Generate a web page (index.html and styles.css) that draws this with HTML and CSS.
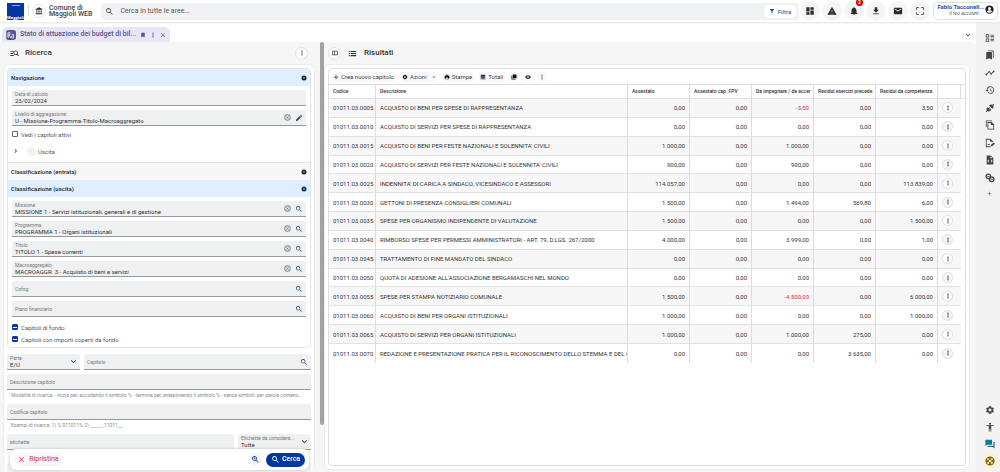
FILE: index.html
```html
<!DOCTYPE html>
<html lang="it">
<head>
<meta charset="utf-8">
<title>Stato di attuazione dei budget di bilancio</title>
<link rel="stylesheet" href="styles.css">
</head>
<body>
<svg class="sprite" aria-hidden="true">
  <symbol id="search" viewBox="0 0 24 24"><path d="M15.5 14h-.8l-.3-.3A6.5 6.5 0 1 0 13.7 14.400l.3.3v.8l5 5 1.500-1.500zm-6 0a4.500 4.500 0 1 1 0-9 4.500 4.500 0 0 1 0 9z"/></symbol>
  <symbol id="bank" viewBox="0 0 24 24"><path d="M4 10v7h3v-7zm6.500 0v7h3v-7zM2 22h20v-3H2zm15-12v7h3v-7zM12 1 2 6v2h20V6z"/></symbol>
  <symbol id="filter" viewBox="0 0 24 24"><path d="M4 4h16v2l-6 7v8h-4v-8L4 6z"/></symbol>
  <symbol id="dashboard" viewBox="0 0 24 24"><path d="M3 13h8V3H3zm0 8h8v-6H3zm10 0h8V11h-8zm0-18v6h8V3z"/></symbol>
  <symbol id="warning" viewBox="0 0 24 24"><path d="M1 21h22L12 2zm12-3h-2v-2h2zm0-4h-2v-4h2z"/></symbol>
  <symbol id="bell" viewBox="0 0 24 24"><path d="M12 22a2 2 0 0 0 2-2h-4c0 1.100.9 2 2 2zm6-6v-5c0-3.100-1.600-5.600-4.500-6.300V4a1.500 1.500 0 0 0-3 0v.7C7.600 5.400 6 7.900 6 11v5l-2 2v1h16v-1z"/></symbol>
  <symbol id="download" viewBox="0 0 24 24"><path d="M19 9h-4V3H9v6H5l7 7zM5 18v2h14v-2z"/></symbol>
  <symbol id="mail" viewBox="0 0 24 24"><path d="M20 4H4a2 2 0 0 0-2 2v12c0 1.100.9 2 2 2h16a2 2 0 0 0 2-2V6a2 2 0 0 0-2-2zm0 4-8 5-8-5V6l8 5 8-5z"/></symbol>
  <symbol id="fullscreen" viewBox="0 0 24 24"><path d="M3 3h6v2H5v4H3zm12 0h6v6h-2V5h-4zM3 15h2v4h4v2H3zm16 0h2v6h-6v-2h4z"/></symbol>
  <symbol id="account" viewBox="0 0 24 24"><path d="M12 1a11 11 0 1 0 0 22 11 11 0 0 0 0-22zm0 4a4 4 0 1 1 0 8 4 4 0 0 1 0-8zm0 15.500a8.500 8.500 0 0 1-6.800-3.500c.1-2 4.500-3 6.800-3s6.700 1 6.800 3a8.500 8.500 0 0 1-6.800 3.500z"/></symbol>
  <symbol id="bookmark" viewBox="0 0 24 24"><path d="M5 3h14v18l-7-3-7 3z"/></symbol>
  <symbol id="dots" viewBox="0 0 24 24"><circle cx="12" cy="5" r="2.600"/><circle cx="12" cy="12" r="2.600"/><circle cx="12" cy="19" r="2.600"/></symbol>
  <symbol id="close" viewBox="0 0 24 24"><path d="m5 3.500 7 7 7-7L20.500 5l-7 7 7 7-1.500 1.500-7-7-7 7L3.500 19l7-7-7-7z"/></symbol>
  <symbol id="manage" viewBox="0 0 24 24"><path d="M1 5h9v2.500H1zm0 5.500h7V13H1zM1 16h9v2.500H1z"/><path fill-rule="evenodd" d="M15 4a6 6 0 0 1 5 9.300l3.500 4.200-1.700 1.700-3.800-4A6 6 0 1 1 15 4zm0 2.200a3.800 3.800 0 1 0 0 7.600 3.800 3.800 0 0 0 0-7.600z"/></symbol>
  <symbol id="gear" viewBox="0 0 24 24"><path fill-rule="evenodd" d="m19.400 13 2.200 1.600-2 3.600-2.600-1-1.600 1L15 21H9l-.4-2.800-1.600-1-2.600 1-2-3.600L4.600 13v-2L2.400 9.400l2-3.600 2.600 1 1.600-1L9 3h6l.4 2.800 1.600 1 2.600-1 2 3.600-2.200 1.600zM12 8.500a3.500 3.500 0 1 0 0 7 3.500 3.500 0 0 0 0-7z"/></symbol>
  <symbol id="expand" viewBox="0 0 24 24"><path fill-rule="evenodd" d="M12 2a10 10 0 1 0 0 20 10 10 0 0 0 0-20zM7 10h10l-5 5z"/></symbol>
  <symbol id="cancel" viewBox="0 0 24 24"><path fill-rule="evenodd" d="M12 1a11 11 0 1 0 0 22 11 11 0 0 0 0-22zm0 3a8 8 0 1 1 0 16 8 8 0 0 1 0-16z"/><path d="m8.500 7 3.500 3.500L15.500 7 17 8.500 13.500 12l3.500 3.500-1.500 1.500-3.500-3.500L8.500 17 7 15.500l3.500-3.500L7 8.500z"/></symbol>
  <symbol id="pencil" viewBox="0 0 24 24"><path d="M3 17.200V21h3.800L17.800 9.900l-3.700-3.700zM20.700 7a1 1 0 0 0 0-1.400l-2.300-2.300a1 1 0 0 0-1.400 0l-1.800 1.800 3.700 3.700z"/></symbol>
  <symbol id="right" viewBox="0 0 24 24"><path d="M8.500 4 6 6.500l5.500 5.500L6 17.500 8.500 20l8-8z"/></symbol>
  <symbol id="down" viewBox="0 0 24 24"><path d="m5 7-2 2 9 9 9-9-2-2-7 7z"/></symbol>
  <symbol id="zoomin" viewBox="0 0 24 24"><path d="M15.500 14h-.8l-.3-.3A6.500 6.500 0 1 0 13.700 14.400l.3.3v.8l5 5 1.500-1.500zm-6 0a4.500 4.500 0 1 1 0-9 4.500 4.500 0 0 1 0 9zM8.700 7h1.600v1.700H12v1.600h-1.700V12H8.700v-1.700H7V8.700h1.700z"/></symbol>
  <symbol id="sidepane" viewBox="0 0 24 24"><path fill-rule="evenodd" d="M1 3h22v18H1zm3 3v12h5V6zm8 0v12h8V6z"/></symbol>
  <symbol id="list" viewBox="0 0 24 24"><path d="M2 5h3v3H2zm5 0h15v3H7zm-5 5.500h3v3H2zm5 0h15v3H7zM2 16h3v3H2zm5 0h15v3H7z"/></symbol>
  <symbol id="plus" viewBox="0 0 24 24"><path d="M10.500 3h3v7.500H21v3h-7.500V21h-3v-7.500H3v-3h7.500z"/></symbol>
  <symbol id="print" viewBox="0 0 24 24"><path fill-rule="evenodd" d="M19 8H5a3 3 0 0 0-3 3v6h4v4h12v-4h4v-6a3 3 0 0 0-3-3zm-3 11H8v-5h8zM18 3H6v4h12z"/></symbol>
  <symbol id="totals" viewBox="0 0 24 24"><path fill-rule="evenodd" d="M3 3h18v18H3zm2 4v3h4V7zm6 0v3h3V7zm5 0v3h3V7zM5 12v2h4v-2zm6 0v2h3v-2zm5 0v2h3v-2zM5 16v3h4v-3zm6 0v3h3v-3zm5 0v3h3v-3z"/></symbol>
  <symbol id="copyfull" viewBox="0 0 24 24"><path d="M7 2h15v15H7z"/><path d="M2 6h3v13h13v3H2z"/></symbol>
  <symbol id="eye" viewBox="0 0 24 24"><path fill-rule="evenodd" d="M12 4.500C7 4.500 2.700 7.600 1 12c1.700 4.400 6 7.500 11 7.500s9.300-3.100 11-7.500c-1.700-4.400-6-7.500-11-7.500zM12 17a5 5 0 1 1 0-10 5 5 0 0 1 0 10zm0-8a3 3 0 1 0 0 6 3 3 0 0 0 0-6z"/></symbol>
  <symbol id="summary" viewBox="0 0 24 24"><path fill-rule="evenodd" d="M2 3h8v8H2zm2 2v4h4V5zm-2 8h8v8H2zm2 2v4h4v-4zM13 4h9v2h-9zm0 4h9v2h-9zm0 6h9v2h-9zm0 4h9v2h-9z"/></symbol>
  <symbol id="bookmarks" viewBox="0 0 24 24"><path d="M19 18l2 1V3a2 2 0 0 0-2-2H9a2 2 0 0 0-2 2h10a2 2 0 0 1 2 2zM15 5H5a2 2 0 0 0-2 2v16l7-3 7 3V7a2 2 0 0 0-2-2z"/></symbol>
  <symbol id="trend" viewBox="0 0 24 24"><path d="M23 8a2 2 0 0 1-2.500 2l-3.600 3.500a2 2 0 1 1-3.800 0L10.500 11h-1L5 15.500a2 2 0 1 1-1.500-1.500L8 9.500a2 2 0 1 1 3.900 0l2.600 2.500h1L19 8.500A2 2 0 1 1 23 8z"/></symbol>
  <symbol id="history" viewBox="0 0 24 24"><path d="M13 3a9 9 0 0 0-9 9H1l4 4 4-4H6a7 7 0 1 1 2.100 4.900l-1.400 1.500A9 9 0 1 0 13 3zm-1 5v5l4.300 2.500.7-1.200-3.500-2.100V8z"/></symbol>
  <symbol id="plug" viewBox="0 0 24 24"><path d="m20 2 2 2-2.500 2.500c1.500 2 1.200 4.500-.5 6.200L17.500 14 10 6.500 11.300 5c1.700-1.700 4.200-2 6.200-.5zM6.500 10l2 2 2-2 1.500 1.500-2 2 1.500 1.500 2-2 1.500 1.500-2 2 1 1-1.300 1.300c-1.700 1.700-4.200 2-6.200.5L4 22l-2-2 2.500-2.500c-1.500-2-1.200-4.500.5-6.200z"/></symbol>
  <symbol id="copy" viewBox="0 0 24 24"><path fill-rule="evenodd" d="M2 1h15v2H4v14H2zm4 4h10l6 6v12H6zm2 2v14h12v-9h-6V7z"/></symbol>
  <symbol id="docedit" viewBox="0 0 24 24"><path fill-rule="evenodd" d="M2 2h11l6 6v2h-2V9h-5V4H4v16h9v2H2z"/><path d="m21 11 3 3-7 6h-3v-3zM6 15h6v2H6z"/></symbol>
  <symbol id="doccode" viewBox="0 0 24 24"><path fill-rule="evenodd" d="M4 1h10l6 6v16H4zm9 2v5h5zM9 11l-3.500 3.500L9 18l1.300-1.300L8 14.500l2.300-2.200zm6 0-1.300 1.300 2.300 2.200-2.300 2.200L15 18l3.500-3.500z"/></symbol>
  <symbol id="chain" viewBox="0 0 24 24"><path fill-rule="evenodd" d="M8 1a7 7 0 1 1 0 14A7 7 0 0 1 8 1zm0 3a4 4 0 1 0 0 8 4 4 0 0 0 0-8z"/><path fill-rule="evenodd" d="M16 8a7 7 0 1 1 0 14 7 7 0 0 1 0-14zm0 3a4 4 0 1 0 0 8 4 4 0 0 0 0-8z"/><path d="M5 7h6v2H5zm8 7h6v2h-6z"/></symbol>
  <symbol id="person" viewBox="0 0 24 24"><circle cx="12" cy="4" r="2.500"/><path d="M21 9h-6v14h-2v-7h-2v7H9V9H3V7h18z"/></symbol>
  <symbol id="chat" viewBox="0 0 24 24"><path d="M22 7h-2v9H6v2c0 .6.400 1 1 1h12l4 4V8c0-.6-.4-1-1-1zm-5 6V3c0-.6-.4-1-1-1H2c-.6 0-1 .4-1 1v14l4-3h11c.6 0 1-.4 1-1z"/></symbol>
  <symbol id="help" viewBox="0 0 24 24"><path fill-rule="evenodd" d="M12 1a11 11 0 1 0 0 22 11 11 0 0 0 0-22zM8 4.500 10 8a5 5 0 0 0-2 2L4.500 8A9 9 0 0 1 8 4.500zm8 0A9 9 0 0 1 19.500 8L16 10a5 5 0 0 0-2-2zM12 9a3 3 0 1 1 0 6 3 3 0 0 1 0-6zm-7.500 7L8 14a5 5 0 0 0 2 2l-2 3.500A9 9 0 0 1 4.500 16zm11.500-2 3.500 2a9 9 0 0 1-3.500 3.500L14 16a5 5 0 0 0 2-2z"/></symbol>
  <symbol id="ra" viewBox="0 0 30 30"><rect width="30" height="30" rx="8"/><path d="M7 24V7h5v8H7m3 0 4 9M17 13h6v11h-6v-6h6M3 8v14" fill="none" stroke="#fff" stroke-width="2"/></symbol>
</svg>

<div class="app">
  <header class="topbar">
    <a class="logo" href="#" aria-label="Maggioli"><i></i><span>Maggioli</span></a>
    <span class="rule"></span>
    <span class="round bank"><svg><use href="#bank"/></svg></span>
    <span class="entity">Comune di<br>Maggioli WEB</span>
    <div class="search">
      <svg><use href="#search"/></svg>
      <input type="text" aria-label="Cerca" placeholder="Cerca in tutte le aree...">
      <button class="filter"><svg><use href="#filter"/></svg>Filtra</button>
    </div>
    <nav class="actions">
      <button class="round" aria-label="Cruscotto"><svg><use href="#dashboard"/></svg></button>
      <button class="round" aria-label="Avvisi"><svg><use href="#warning"/></svg></button>
      <button class="round" aria-label="Notifiche"><svg><use href="#bell"/></svg><b class="badge">2</b></button>
      <button class="round" aria-label="Scarica"><svg><use href="#download"/></svg></button>
      <button class="round" aria-label="Messaggi"><svg><use href="#mail"/></svg></button>
      <button class="round" aria-label="Schermo intero"><svg><use href="#fullscreen"/></svg></button>
    </nav>
    <button class="account"><span><strong>Fabio Tacconell...</strong><em>il tuo account</em></span><svg><use href="#account"/></svg></button>
  </header>

  <div class="workspace">
    <div class="main">
      <div class="tabs">
        <div class="tab">
          <svg class="tab-logo"><use href="#ra"/></svg>
          <span>Stato di attuazione dei budget di bil...</span>
          <button aria-label="Segnalibro"><svg><use href="#bookmark"/></svg></button>
          <button aria-label="Opzioni"><svg><use href="#dots"/></svg></button>
          <button aria-label="Chiudi"><svg><use href="#close"/></svg></button>
        </div>
        <button class="more" aria-label="Altre schede"><svg><use href="#down"/></svg></button>
      </div>

      <div class="panes">
        <section class="pane filters">
          <div class="pane-head">
            <svg><use href="#manage"/></svg>
            <h2>Ricerca</h2>
            <button class="circle" aria-label="Opzioni"><svg><use href="#dots"/></svg></button>
          </div>
          <form class="sheet">
            <div class="accordion">
              <button type="button" class="acc open"><span>Navigazione</span><svg><use href="#expand"/></svg></button>
              <div class="acc-body">
                <div class="field"><div class="text"><label for="f1">Data di calcolo</label><input id="f1" value="23/02/2024"></div></div>
                <div class="field"><div class="text"><label for="f2">Livello di aggregazione:</label><input id="f2" value="U - Missione-Programma-Titolo-Macroaggregato"></div><svg class="clear"><use href="#cancel"/></svg><svg class="look"><use href="#pencil"/></svg></div>
                <label class="check first"><input type="checkbox">Vedi i capitoli attivi</label>
                <div class="tree"><svg><use href="#right"/></svg><i></i><span>Uscita</span></div>
              </div>
              <button type="button" class="acc shut"><span>Classificazione (entrata)</span><svg><use href="#expand"/></svg></button>
              <button type="button" class="acc open blue"><span>Classificazione (uscita)</span><svg><use href="#expand"/></svg></button>
              <div class="acc-body">
                <div class="field"><div class="text"><label for="f3">Missione</label><input id="f3" value="MISSIONE 1 - Servizi istituzionali, generali e di gestione"></div><svg class="clear"><use href="#cancel"/></svg><svg class="look"><use href="#search"/></svg></div>
                <div class="field"><div class="text"><label for="f4">Programma</label><input id="f4" value="PROGRAMMA 1 - Organi istituzionali"></div><svg class="clear"><use href="#cancel"/></svg><svg class="look"><use href="#search"/></svg></div>
                <div class="field"><div class="text"><label for="f5">Titolo</label><input id="f5" value="TITOLO 1 - Spese correnti"></div><svg class="clear"><use href="#cancel"/></svg><svg class="look"><use href="#search"/></svg></div>
                <div class="field"><div class="text"><label for="f6">Macroaggregato</label><input id="f6" value="MACROAGGR. 3 - Acquisto di beni e servizi"></div><svg class="clear"><use href="#cancel"/></svg><svg class="look"><use href="#search"/></svg></div>
                <div class="field"><div class="text"><input aria-label="Cofog" placeholder="Cofog"></div><svg class="look"><use href="#search"/></svg></div>
                <div class="field"><div class="text"><input aria-label="Piano finanziario" placeholder="Piano finanziario"></div><svg class="look"><use href="#search"/></svg></div>
                <label class="check"><input type="checkbox" checked>Capitoli di fondo</label>
                <label class="check last"><input type="checkbox" checked>Capitoli con importi coperti da fondo</label>
              </div>
            </div>
            <div class="row">
              <div class="field small"><div class="text"><label for="s1">Parte</label><select id="s1"><option>E/U</option></select></div><svg class="look"><use href="#down"/></svg></div>
              <div class="field"><div class="text"><input aria-label="Capitolo" placeholder="Capitolo"></div><svg class="look"><use href="#search"/></svg></div>
            </div>
            <div class="field"><div class="text"><input aria-label="Descrizione capitolo" placeholder="Descrizione capitolo"></div></div>
            <p class="hint">Modalità di ricerca: - inizia per, accodando il simbolo % - termina per, anteponendo il simbolo % - senza simboli, per parola contenu...</p>
            <div class="field"><div class="text"><input aria-label="Codifica capitolo" placeholder="Codifica capitolo"></div></div>
            <p class="hint">Esempi di ricerca: 1) %.011011% 2) ____._.11011__</p>
            <div class="row">
              <div class="field"><div class="text"><input aria-label="etichette" placeholder="etichette"></div></div>
              <div class="field small"><div class="text"><label for="s2">Etichette da considera...</label><select id="s2"><option>Tutte</option></select></div><svg class="look"><use href="#down"/></svg></div>
            </div>
            <div class="field under"></div>
          </form>
          <div class="submit">
            <button class="reset"><svg><use href="#close"/></svg>Ripristina</button>
            <button class="zoom" aria-label="Ricerca avanzata"><svg><use href="#zoomin"/></svg></button>
            <button class="go"><svg><use href="#search"/></svg>Cerca</button>
          </div>
        </section>
        <div class="scroll"><i></i></div>

        <section class="pane results">
          <div class="pane-head">
            <button class="circle" aria-label="Pannello"><svg><use href="#sidepane"/></svg></button>
            <svg class="list"><use href="#list"/></svg>
            <h2>Risultati</h2>
          </div>
          <div class="sheet">
            <div class="grid">
              <div class="toolbar">
                <button><svg><use href="#plus"/></svg>Crea nuovo capitolo</button>
                <button><svg class="ink"><use href="#gear"/></svg>Azioni<svg class="caret"><use href="#down"/></svg></button>
                <button><svg class="ink"><use href="#print"/></svg>Stampe</button>
                <button><svg class="ink"><use href="#totals"/></svg>Totali</button>
                <button aria-label="Copia"><svg class="ink"><use href="#copyfull"/></svg></button>
                <button aria-label="Mostra"><svg class="ink"><use href="#eye"/></svg></button>
                <button aria-label="Altro"><svg class="sky"><use href="#dots"/></svg></button>
              </div>
              <table>
                <colgroup><col class="code"><col><col class="num"><col class="num"><col class="num"><col class="num"><col class="num"><col class="menu"><col class="edge"></colgroup>
                <thead><tr><th>Codice</th><th>Descrizione</th><th>Assestato</th><th>Assestato cap. FPV</th><th>Da impegnare / da accer</th><th>Residui esercizi precede</th><th>Residui da competenza</th><th></th><th></th></tr></thead>
                <tbody>
                  <tr><td>01011.03.0005</td><td>ACQUISTO DI BENI PER SPESE DI RAPPRESENTANZA</td><td>0,00</td><td>0,00</td><td class="neg">-3,50</td><td>0,00</td><td>3,50</td><td><button aria-label="Menu"><svg><use href="#dots"/></svg></button></td><td></td></tr>
                  <tr><td>01011.03.0010</td><td>ACQUISTO DI SERVIZI PER SPESE DI RAPPRESENTANZA</td><td>0,00</td><td>0,00</td><td>0,00</td><td>0,00</td><td>0,00</td><td><button aria-label="Menu"><svg><use href="#dots"/></svg></button></td><td></td></tr>
                  <tr><td>01011.03.0015</td><td>ACQUISTO DI BENI PER FESTE NAZIONALI E SOLENNITA' CIVILI</td><td>1.000,00</td><td>0,00</td><td>1.000,00</td><td>0,00</td><td>0,00</td><td><button aria-label="Menu"><svg><use href="#dots"/></svg></button></td><td></td></tr>
                  <tr><td>01011.03.0020</td><td>ACQUISTO DI SERVIZI PER FESTE NAZIONALI E SOLENNITA' CIVILI</td><td>900,00</td><td>0,00</td><td>900,00</td><td>0,00</td><td>0,00</td><td><button aria-label="Menu"><svg><use href="#dots"/></svg></button></td><td></td></tr>
                  <tr><td>01011.03.0025</td><td>INDENNITA' DI CARICA A SINDACO, VICESINDACO E ASSESSORI</td><td>114.057,00</td><td>0,00</td><td>0,00</td><td>0,00</td><td>113.839,00</td><td><button aria-label="Menu"><svg><use href="#dots"/></svg></button></td><td></td></tr>
                  <tr><td>01011.03.0030</td><td>GETTONI DI PRESENZA CONSIGLIERI COMUNALI</td><td>1.500,00</td><td>0,00</td><td>1.494,00</td><td>569,80</td><td>6,00</td><td><button aria-label="Menu"><svg><use href="#dots"/></svg></button></td><td></td></tr>
                  <tr><td>01011.03.0035</td><td>SPESE PER ORGANISMO INDIPENDENTE DI VALUTAZIONE</td><td>1.500,00</td><td>0,00</td><td>0,00</td><td>0,00</td><td>1.500,00</td><td><button aria-label="Menu"><svg><use href="#dots"/></svg></button></td><td></td></tr>
                  <tr><td>01011.03.0040</td><td>RIMBORSO SPESE PER PERMESSI AMMINISTRATORI - ART. 79, D.LGS. 267/2000</td><td>4.000,00</td><td>0,00</td><td>3.999,00</td><td>0,00</td><td>1,00</td><td><button aria-label="Menu"><svg><use href="#dots"/></svg></button></td><td></td></tr>
                  <tr><td>01011.03.0045</td><td>TRATTAMENTO DI FINE MANDATO DEL SINDACO</td><td>0,00</td><td>0,00</td><td>0,00</td><td>0,00</td><td>0,00</td><td><button aria-label="Menu"><svg><use href="#dots"/></svg></button></td><td></td></tr>
                  <tr><td>01011.03.0050</td><td>QUOTA DI ADESIONE ALL'ASSOCIAZIONE BERGAMASCHI NEL MONDO</td><td>0,00</td><td>0,00</td><td>0,00</td><td>0,00</td><td>0,00</td><td><button aria-label="Menu"><svg><use href="#dots"/></svg></button></td><td></td></tr>
                  <tr><td>01011.03.0055</td><td>SPESE PER STAMPA NOTIZIARIO COMUNALE</td><td>1.500,00</td><td>0,00</td><td class="neg">-4.500,00</td><td>0,00</td><td>6.000,00</td><td><button aria-label="Menu"><svg><use href="#dots"/></svg></button></td><td></td></tr>
                  <tr><td>01011.03.0060</td><td>ACQUISTO DI BENI PER ORGANI ISTITUZIONALI</td><td>1.000,00</td><td>0,00</td><td>0,00</td><td>0,00</td><td>1.000,00</td><td><button aria-label="Menu"><svg><use href="#dots"/></svg></button></td><td></td></tr>
                  <tr><td>01011.03.0065</td><td>ACQUISTO DI SERVIZI PER ORGANI ISTITUZIONALI</td><td>1.000,00</td><td>0,00</td><td>1.000,00</td><td>275,00</td><td>0,00</td><td><button aria-label="Menu"><svg><use href="#dots"/></svg></button></td><td></td></tr>
                  <tr><td>01011.03.0070</td><td>REDAZIONE E PRESENTAZIONE PRATICA PER IL RICONOSCIMENTO DELLO STEMMA E DEL GO</td><td>0,00</td><td>0,00</td><td>0,00</td><td>3.635,00</td><td>0,00</td><td><button aria-label="Menu"><svg><use href="#dots"/></svg></button></td><td></td></tr>
                </tbody>
              </table>
            </div>
          </div>
        </section>
      </div>
    </div>

    <aside class="rail">
      <nav class="tools">
        <button aria-label="Riepilogo"><svg><use href="#summary"/></svg></button>
        <button aria-label="Segnalibri"><svg><use href="#bookmarks"/></svg></button>
        <button aria-label="Andamento"><svg><use href="#trend"/></svg></button>
        <button aria-label="Cronologia"><svg><use href="#history"/></svg></button>
        <button aria-label="Connessioni"><svg><use href="#plug"/></svg></button>
        <button aria-label="Copie"><svg><use href="#copy"/></svg></button>
        <button aria-label="Documenti"><svg><use href="#docedit"/></svg></button>
        <button aria-label="Codice"><svg><use href="#doccode"/></svg></button>
        <button aria-label="Collegamenti"><svg><use href="#chain"/></svg></button>
        <button class="add" aria-label="Aggiungi"><svg><use href="#plus"/></svg></button>
      </nav>
      <nav class="support">
        <button aria-label="Impostazioni"><svg><use href="#gear"/></svg></button>
        <button aria-label="Accessibilità"><svg><use href="#person"/></svg></button>
        <button class="chat" aria-label="Chat"><svg><use href="#chat"/></svg></button>
        <button class="help" aria-label="Aiuto"><svg><use href="#help"/></svg></button>
      </nav>
    </aside>
  </div>
</div>
</body>
</html>
```

FILE: styles.css
```css
* { box-sizing: border-box; }
body { margin: 0; font: 6px/7px Roboto, "Liberation Sans", sans-serif; color: #333; background: #fff; }
.sprite { position: absolute; width: 0; height: 0; }
svg { width: 8px; height: 8px; fill: currentColor; flex: none; display: block; }
button, input, select { font: inherit; color: inherit; background: none; border: 0; padding: 0; margin: 0; }
button { display: flex; align-items: center; justify-content: center; }
h2, p { margin: 0; }

.app { height: 100vh; display: flex; flex-direction: column; overflow: hidden; }

/* top bar */
.topbar { flex: none; height: 22px; padding: 0 2px 0 7px; display: flex; align-items: center; box-shadow: 0 1px 2px #e4e4e4; z-index: 2; }
.logo { width: 17px; height: 17px; background: #04379e; color: #fff; text-decoration: none; display: flex; flex-direction: column; justify-content: space-between; align-items: center; overflow: hidden; font: bold 4px/4px "Open Sans", Roboto, sans-serif; }
.logo i { width: 8px; height: 1px; margin-top: 2px; background: #8ea6dc; }
.rule { width: 1px; height: 12px; margin: 0 3px 0 4px; background: #ddd; }
.round { position: relative; width: 20px; height: 20px; border-radius: 50%; background: #f5f5f5; display: flex; align-items: center; justify-content: center; color: #2b2b2b; }
.round svg { width: 10px; height: 10px; }
.bank { width: 14px; height: 14px; background: #fff; border: 1px solid #e6e6e6; }
.bank svg { width: 8px; height: 8px; }
.entity { margin: 0 9px 0 3px; font-size: 7px; line-height: 6px; font-weight: 500; color: #444; white-space: nowrap; }
.search { flex: 1; height: 17px; border-radius: 4px; background: #f0f2f3; display: flex; align-items: center; padding: 0 3px 0 4px; color: #444; }
.search > svg { width: 9px; height: 9px; }
.search input { flex: 1; min-width: 0; margin-left: 6px; font-size: 7px; }
.search input::placeholder { color: #555; opacity: 1; }
.filter { width: 32px; height: 13px; gap: 3px; border-radius: 5px; background: #fff; color: #1447a6; }
.filter svg { width: 6px; height: 6px; }
.actions { display: flex; gap: 2px; margin: 0 3px 0 1px; }
.badge { position: absolute; right: 1px; top: -2px; width: 7px; height: 7px; border-radius: 50%; background: #d50000; color: #fff; font-size: 5px; line-height: 7px; text-align: center; }
.account { width: 65px; height: 18px; padding-bottom: 2px; margin-bottom: 1px; border: 1px solid #e0e0e0; border-radius: 5px; background: #fff; }
.account span { display: flex; flex-direction: column; }
.account strong { line-height: 7px; color: #2452ae; }
.account em { font-size: 5px; line-height: 6px; color: #555; text-align: right; padding-right: 6px; }
.account svg { width: 9px; height: 9px; color: #222; }

.workspace { flex: 1; min-height: 0; display: flex; }
.main { flex: 1; min-width: 0; display: flex; flex-direction: column; }

/* tabs */
.tabs { flex: none; height: 20px; padding: 5px 5px 0 2px; display: flex; justify-content: space-between; }
.tab { width: 168px; padding: 0 7px 0 4px; border-radius: 5px 5px 0 0; background: #e8e6f5; color: #54548c; display: flex; align-items: center; gap: 4px; font-size: 7px; font-weight: 500; }
.tab span { flex: 1; white-space: nowrap; }
.tab .tab-logo { width: 10px; height: 10px; }
.tab button svg { width: 6px; height: 6px; }
.more svg { width: 6px; height: 6px; }

/* panes */
.panes { flex: 1; min-height: 0; display: grid; grid-template-columns: 320fr 4px 652fr; background: #f6f6f6; border-radius: 0 6px 0 0; }
.pane { position: relative; min-width: 0; display: flex; flex-direction: column; overflow: hidden; }
.pane-head { flex: none; height: 22px; display: flex; align-items: center; padding: 0 12px 0 10px; gap: 6px; }
.pane-head svg { width: 9px; height: 9px; }
.pane-head h2 { font-size: 8px; line-height: 10px; font-weight: 500; color: #333; }
.circle { width: 13px; height: 13px; border-radius: 50%; background: #fff; border: 1px solid #e0e0e0; color: #444; }
.circle svg, .pane-head .circle svg { width: 6px; height: 6px; }
.filters .circle { margin-left: auto; }
.scroll i { display: block; height: 89%; background: #a3a1a1; border-radius: 2px; }
.sheet { background: #fff; border: 1px solid #ececec; border-radius: 6px; }
.filters .sheet { flex: 1; margin: 0 5px 0 3px; padding: 3px 3px 0; border-bottom: 0; overflow: hidden; }

.accordion { border: 1px solid #e4e4e4; border-radius: 4px; overflow: hidden; margin-bottom: 6px; }
.acc { width: 100%; height: 17px; padding: 0 3px; justify-content: space-between; font-weight: 500; color: #222; }
.acc svg { width: 6px; height: 6px; }
.acc.open { background: #dfeffd; }
.acc.shut { height: 18px; background: #f7f7f7; border-top: 1px solid #e4e4e4; }
.acc.blue svg { color: #0b2f66; }
.acc-body { padding: 4px 4px 0; }
.field { height: 16px; margin-bottom: 4px; padding: 0 3px; border-radius: 3px 3px 0 0; border-bottom: 1px solid #999; background: #eef0f1; display: flex; align-items: center; gap: 4px; }
.text { flex: 1; min-width: 0; display: flex; flex-direction: column; }
.text label { font-size: 5px; line-height: 5px; color: #777; white-space: nowrap; }
.text input, .text select { width: 100%; height: 7px; line-height: 7px; }
.text select { appearance: none; }
.text input::placeholder { font-size: 5px; color: #777; opacity: 1; }
.clear { width: 7px; height: 7px; color: #888; }
.look { width: 8px; height: 8px; color: #24486f; }
.small .look { width: 7px; height: 7px; }
.check { display: flex; align-items: center; gap: 3px; height: 12px; color: #555; }
.check input { appearance: none; width: 6px; height: 6px; border: 1px solid #666; border-radius: 1px; background: #fff; display: flex; align-items: center; justify-content: center; }
.check input:checked { background: #0a3a9e; border-color: #0a3a9e; }
.check input:checked::before { content: ""; width: 4px; height: 1px; background: #fff; }
.check.first { margin-top: -2px; }
.check.last { margin-bottom: 2px; }
.tree { display: flex; align-items: center; height: 22px; gap: 8px; color: #555; padding-left: 1px; }
.tree svg { width: 6px; height: 6px; }
.tree i { width: 9px; height: 9px; border-radius: 50%; background: #f2f2f2; margin-right: -6px; }
.row { display: flex; gap: 4px; }
.row .field { flex: 1; }
.row .small { flex: 0 0 24%; }
.hint { height: 9px; padding: 0 4px; margin-top: -2px; margin-bottom: 3px; font-size: 5px; color: #888; white-space: nowrap; overflow: hidden; text-overflow: ellipsis; }
.under { margin-top: 8px; }

.submit { position: absolute; left: 10px; right: 11px; bottom: 2px; height: 21px; padding: 0 4px; border-radius: 6px; background: #fff; box-shadow: 0 0 3px #bbb; display: flex; align-items: center; gap: 4px; }
.reset { width: 49px; height: 13px; gap: 4px; border-radius: 7px; background: #f8f8f8; color: #d02f2f; font-size: 7px; }
.reset svg { width: 7px; height: 7px; }
.zoom { margin-left: auto; width: 13px; height: 13px; border-radius: 50%; background: #f6f6f6; color: #0a3a9e; }
.zoom svg { width: 9px; height: 9px; }
.go { width: 39px; height: 14px; gap: 2px; border-radius: 7px; background: #04379e; color: #fff; font-size: 7px; font-weight: 500; }
.go svg { width: 9px; height: 9px; }

/* results */
.results .pane-head { padding-left: 4px; gap: 7px; }
.results .sheet { flex: 1; margin: 0 6px 2px 0; padding: 3px; display: flex; }
.grid { flex: 1; min-width: 0; border: 1px solid #dfdfdf; border-radius: 4px; }
.toolbar { height: 15px; padding-left: 2px; display: flex; align-items: center; gap: 4px; color: #444; }
.toolbar button { height: 11px; padding: 0 2px; gap: 2px; border-radius: 5px; background: #f8f8f8; }
.toolbar svg { width: 6px; height: 6px; }
.toolbar .caret { width: 4px; height: 4px; margin-left: 3px; }
.toolbar .ink { color: #111; }
.toolbar .sky { color: #2a78c0; }
table { width: 100%; height: 279px; table-layout: fixed; border-collapse: separate; border-spacing: 0; border-top: 1px solid #dcdcdc; }
.code { width: 47px; }
.num { width: 62px; }
.menu { width: 23px; }
.edge { width: 4px; }
th, td { height: 18px; padding: 0 4px; text-align: left; white-space: nowrap; overflow: hidden; border-right: 1px solid #dcdcdc; border-bottom: 1px solid #e2e2e2; font-weight: 400; }
th { height: 14px; padding-right: 0; font-size: 5px; font-weight: 500; color: #333; }
th:nth-last-child(1), td:nth-last-child(1), td:nth-last-child(2) { border-right: 0; }
td:nth-last-child(1) { border-bottom: 0; padding: 0; }
th:nth-last-child(1) { padding: 0; }
td:nth-child(1), td:nth-child(2) { padding-right: 0; }
td:nth-child(n+3) { text-align: right; }
tbody tr:nth-child(odd) td:not(:last-child) { background: #f7f7f7; }
tbody tr:last-child td { border-bottom: 0; }
td button { width: 11px; height: 11px; border: 1px solid #dedede; border-radius: 50%; background: #fff; }
tbody tr:nth-child(even) button { background: #f5f5f5; }
td button svg { width: 6px; height: 6px; }
td.neg { color: #d32f3f; }

/* right rail */
.rail { flex: none; width: 24px; padding: 7px 0 3px 3px; background: #f3f3f3; display: flex; flex-direction: column; justify-content: space-between; color: #444; }
.tools, .support { display: flex; flex-direction: column; align-items: center; }
.tools { height: 172px; justify-content: space-between; }
.rail button { width: 17px; height: 17px; }
.rail svg { width: 10px; height: 10px; }
.rail .add { color: #2a6db0; height: 14px; }
.rail .add svg { width: 5px; height: 5px; }
.support button { height: 17px; }
.rail .chat { color: #147a9c; }
.rail .help { color: #85680f; background: #faf3dc; border-radius: 50%; }
```
